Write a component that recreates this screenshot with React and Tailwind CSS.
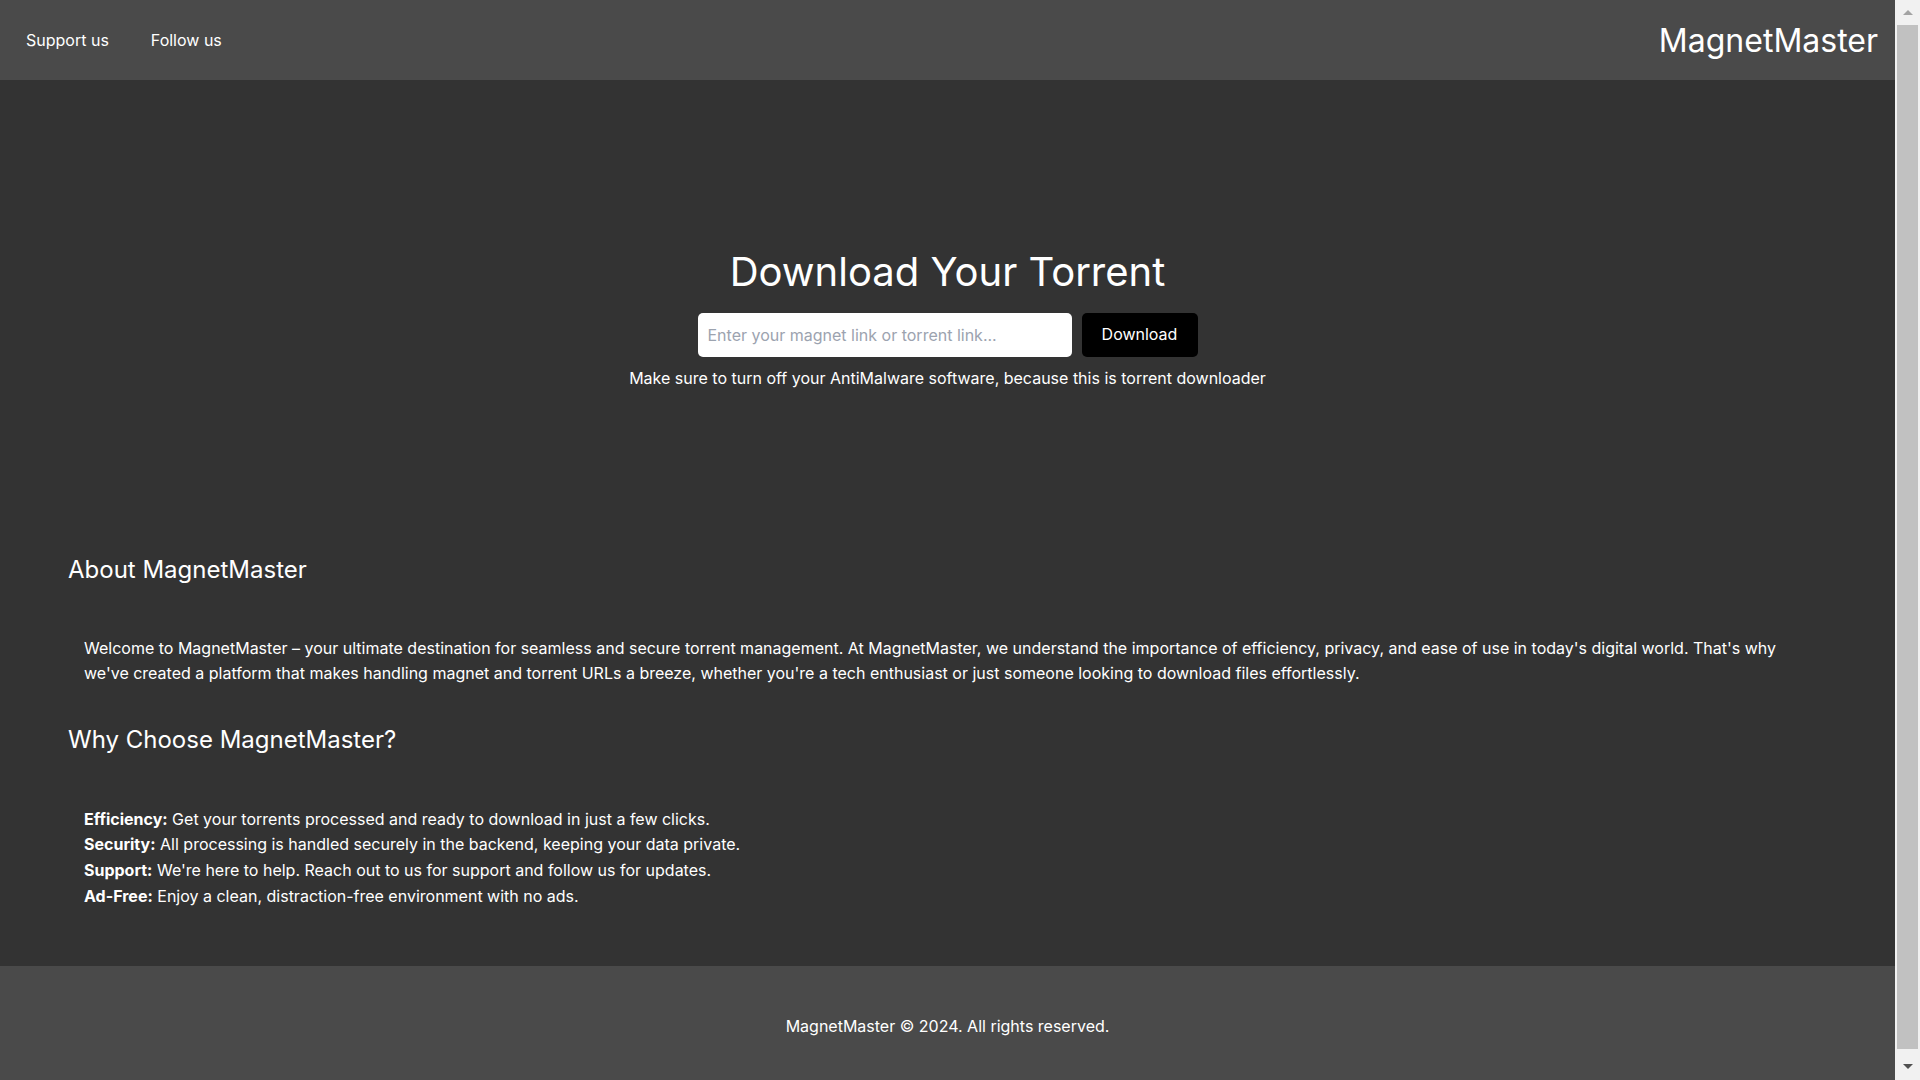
import React from 'react';

const features = [
  { label: 'Efficiency:', text: 'Get your torrents processed and ready to download in just a few clicks.' },
  { label: 'Security:', text: 'All processing is handled securely in the backend, keeping your data private.' },
  { label: 'Support:', text: "We're here to help. Reach out to us for support and follow us for updates." },
  { label: 'Ad-Free:', text: 'Enjoy a clean, distraction-free environment with no ads.' }
];

function Scrollbar() {
  return (
    <div className="flex h-screen w-[25px] shrink-0 flex-col bg-[#f1f1f1]">
      <div className="flex h-[25px] shrink-0 justify-center pt-[10px]">
        <div className="h-0 w-0 border-x-[5px] border-b-[5px] border-solid border-x-transparent border-b-[#a3a3a3]" />
      </div>
      <div className="mx-[2px] h-[1024px] bg-[#c1c1c1]" />
      <div className="flex-1" />
      <div className="flex h-[25px] shrink-0 justify-center pt-[9px]">
        <div className="h-0 w-0 border-x-[5px] border-t-[5px] border-solid border-x-transparent border-t-[#505050]" />
      </div>
    </div>
  );
}

export default function App() {
  return (
    <div className="flex h-screen overflow-hidden font-['Inter','Liberation_Sans',sans-serif] text-[16px] leading-[25.6px] text-white">
      <div className="min-w-0 flex-1 overflow-y-auto bg-[#333333] [scrollbar-width:none]">
        <header className="flex h-[80px] items-center justify-between bg-[#4a4a4a] pl-[26px] pr-[17px] pt-[1px]">
          <nav className="flex items-center gap-[42px]">
            <a href="#" className="text-white">Support us</a>
            <a href="#" className="text-white">Follow us</a>
          </nav>
          <div className="text-[32px] leading-[40px]">MagnetMaster</div>
        </header>

        <main className="pb-[57px]">
          <section className="flex flex-col items-center pt-[168px]">
            <h1 className="text-[40px] leading-[48px]">Download Your Torrent</h1>
            <form className="mt-[17px] flex gap-[10px]" onSubmit={(e) => e.preventDefault()}>
              <input
                type="text"
                placeholder="Enter your magnet link or torrent link..."
                className="h-[44px] w-[374px] rounded-[5px] bg-white px-[10px] text-[16px] text-black placeholder:text-[#9ca3af] focus:outline-none"
              />
              <button type="submit" className="h-[44px] w-[116px] rounded-[5px] bg-black text-[16px] text-white">
                Download
              </button>
            </form>
            <p className="mt-[9px]">Make sure to turn off your AntiMalware software, because this is torrent downloader</p>
          </section>

          <section className="mt-[162px] px-[68px]">
            <h2 className="text-[24px] leading-[32px]">About MagnetMaster</h2>
            <p className="mx-[16px] mt-[50px]">
              Welcome to MagnetMaster – your ultimate destination for seamless and secure torrent management. At MagnetMaster, we understand the importance of efficiency, privacy, and ease of use in today's digital world. That's why we've created a platform that makes handling magnet and torrent URLs a breeze, whether you're a tech enthusiast or just someone looking to download files effortlessly.
            </p>
            <h2 className="mt-[37px] text-[24px] leading-[32px]">Why Choose MagnetMaster?</h2>
            <ul className="mx-[16px] mt-[51px]">
              {features.map((item) => (
                <li key={item.label}>
                  <strong className="font-bold">{item.label}</strong> {item.text}
                </li>
              ))}
            </ul>
          </section>
        </main>

        <footer className="bg-[#4a4a4a] py-[48px] text-center">
          <p>MagnetMaster © 2024. All rights reserved.</p>
        </footer>
      </div>
      <Scrollbar />
    </div>
  );
}
